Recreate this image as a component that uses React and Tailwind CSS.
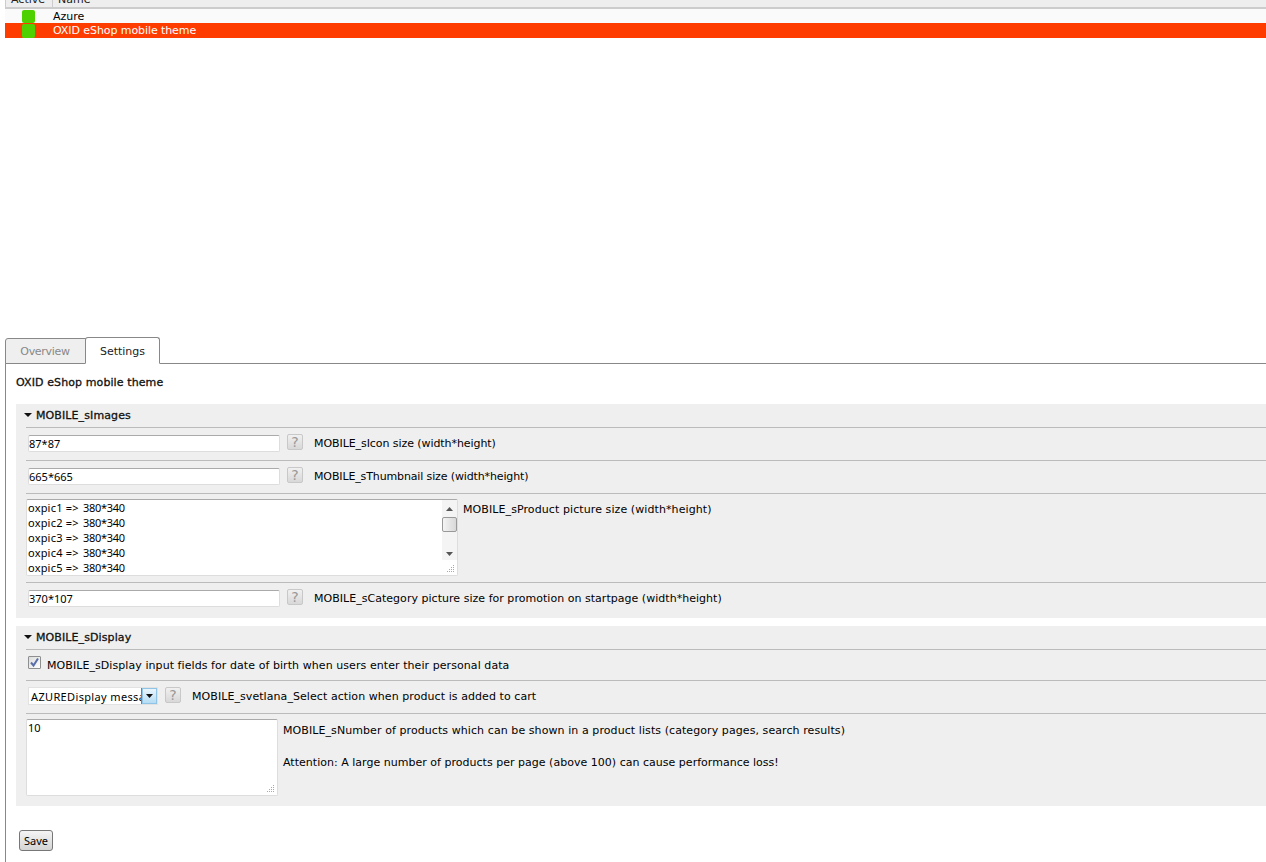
function Help() {
  return (
    <span className="shrink-0 w-[16px] h-[16px] border border-[#c8c8c8] rounded-[2px] bg-gradient-to-b from-[#f0f0f0] to-[#d8d8d8] flex items-center justify-center text-[14px] leading-none text-[#999]">?</span>
  );
}
function Grip() {
  return (
    <svg className="absolute right-[2px] bottom-[2px]" width="9" height="9" viewBox="0 0 9 9" fill="#aaa">
      <rect x="7" y="1" width="1" height="1" />
      <rect x="5" y="3" width="1" height="1" />
      <rect x="7" y="3" width="1" height="1" />
      <rect x="3" y="5" width="1" height="1" />
      <rect x="5" y="5" width="1" height="1" />
      <rect x="7" y="5" width="1" height="1" />
      <rect x="1" y="7" width="1" height="1" />
      <rect x="3" y="7" width="1" height="1" />
      <rect x="5" y="7" width="1" height="1" />
      <rect x="7" y="7" width="1" height="1" />
    </svg>
  );
}
function Caret() {
  return (
    <svg className="shrink-0" width="8" height="4" viewBox="0 0 8 4"><path d="M0 0h8L4 4z" fill="#111" /></svg>
  );
}
function InputRow({ value, label, tracking }) {
  return (
    <div className="border-t border-[#bbb] h-[33px] flex items-start pl-[2px]">
      <input readOnly value={value} className="mt-[7px] w-[252px] h-[17px] bg-white border border-[#ddd] border-t-[#aaa] rounded-[2px] px-0 text-[11px] text-black outline-none font-['Noto_Sans',sans-serif]" />
      <div className="mt-[6px] ml-[7px]"><Help /></div>
      <span className={"ml-[11px] mt-[9px] leading-[14px] " + tracking}>{label}</span>
    </div>
  );
}
function Group({ title, children, className }) {
  return (
    <section className={"bg-[#efefef] pl-[10px] " + className}>
      <div className="h-[23px] -ml-[10px] pl-[8px] pb-[1px] flex items-center gap-[4px] text-[#111] [-webkit-text-stroke:0.3px_#111] tracking-[0.1px]">
        <Caret /><span>{title}</span>
      </div>
      {children}
    </section>
  );
}
const pics = ["oxpic1", "oxpic2", "oxpic3", "oxpic4", "oxpic5"];
export default function App() {
  return (
    <div className="w-[1266px] h-[862px] overflow-hidden bg-white text-[11px] leading-[15px] text-black font-['DejaVu_Sans',sans-serif]">
      <div className="ml-[5px]">
        <div className="h-[9px] overflow-hidden bg-[#eeeeee] border-b-2 border-[#ccc] flex items-start text-[#222]">
          <span className="w-[48px] h-[7px] border-r border-l border-[#ccc] pl-[5px]"><span className="block -mt-[8px]">Active</span></span>
          <span className="pl-[5px]"><span className="block -mt-[8px]">Name</span></span>
        </div>
        <div className="h-[14px] bg-[#fafafa] flex items-center">
          <span className="ml-[17px] w-[13px] h-[13px] rounded-[2px] bg-[#4fd100]" />
          <span className="ml-[18px]">Azure</span>
        </div>
        <div className="h-[15px] bg-[#ff3c00] flex items-center text-white">
          <span className="ml-[17px] w-[13px] h-[14px] rounded-[2px] bg-[#4fd100]" />
          <span className="ml-[18px] tracking-[-0.08px]">OXID eShop mobile theme</span>
        </div>
      </div>
      <div className="h-[299px]" />
      <div className="ml-[5px] flex items-end h-[27px] border-b border-[#888]">
        <div className="w-[81px] h-[26px] -mb-px bg-[#efefef] border border-[#888] rounded-tl-[3px] pr-[1px] flex items-center justify-center text-[#888] tracking-[-0.3px]">Overview</div>
        <div className="w-[75px] h-[27px] -mb-px -ml-px bg-white border border-[#888] border-b-white rounded-t-[3px] pt-[1px] flex items-center justify-center text-[#222]">Settings</div>
      </div>
      <div className="ml-[5px] border-l border-[#888] pl-[10px] h-[498px]">
        <h1 className="h-[40px] pt-[11px] text-[#111] [-webkit-text-stroke:0.3px_#111] tracking-[0.1px]">OXID eShop mobile theme</h1>
        <Group title="MOBILE_sImages" className="h-[214px]">
          <InputRow value="87*87" label="MOBILE_sIcon size (width*height)" tracking="-tracking-[0.07px]" />
          <InputRow value="665*665" label="MOBILE_sThumbnail size (width*height)" tracking="-tracking-[0.13px]" />
          <div className="border-t border-[#bbb] h-[89px] flex items-start">
            <div className="relative mt-[5px] w-[432px] h-[77px] bg-white border border-[#ddd] border-t-[#aaa] rounded-[2px] overflow-hidden pl-[1px] font-['Noto_Sans',sans-serif]">
              {pics.map((p) => (
                <div key={p} className="whitespace-nowrap">
                  <span className="inline-block w-[55px] tracking-[0.2px]">{p} =&gt;</span><span className="tracking-[-0.3px]">380*340</span>
                </div>
              ))}
              <div className="absolute right-0 top-0 w-[15px] h-[60px] bg-[#f4f4f4] flex flex-col items-center">
                <svg className="mt-[7px]" width="7" height="4" viewBox="0 0 7 4"><path d="M0 4h7L3.5 0z" fill="#555" /></svg>
                <div className="mt-[6px] w-[15px] h-[15px] border border-[#999] rounded-[2px] bg-gradient-to-r from-[#f4f4f4] to-[#d8d8d8]" />
                <svg className="mt-[20px]" width="7" height="4" viewBox="0 0 7 4"><path d="M0 0h7L3.5 4z" fill="#555" /></svg>
              </div>
              <Grip />
            </div>
            <span className="ml-[5px] mt-[9px] leading-[14px] tracking-[0.09px]">MOBILE_sProduct picture size (width*height)</span>
          </div>
          <InputRow value="370*107" label="MOBILE_sCategory picture size for promotion on startpage (width*height)" tracking="tracking-[0.03px]" />
        </Group>
        <div className="h-[8px]" />
        <Group title="MOBILE_sDisplay" className="h-[180px]">
          <div className="border-t border-[#bbb] h-[31px] flex items-start pl-[2px]">
            <span className="mt-[6px] w-[13px] h-[13px] border border-[#8e8f8f] rounded-[1px] bg-gradient-to-br from-[#dcdcdc] to-white flex items-center justify-center">
              <svg width="11" height="11" viewBox="0 0 11 11"><path d="M2 5.5 4.5 8.5 9 1.5" fill="none" stroke="#5a6fa8" strokeWidth="2" /></svg>
            </span>
            <span className="ml-[6px] mt-[9px] leading-[14px] tracking-[0.07px]">MOBILE_sDisplay input fields for date of birth when users enter their personal data</span>
          </div>
          <div className="border-t border-[#bbb] h-[33px] flex items-start pl-[2px]">
            <div className="mt-[6px] w-[130px] h-[18px] bg-white border border-[#e2e2e2] flex overflow-hidden font-['Noto_Sans',sans-serif]">
              <span className="w-[113px] pl-[2px] overflow-hidden whitespace-nowrap leading-[18px] tracking-[0.35px] border-r border-[#3d8fcf]">AZUREDisplay message</span>
              <span className="flex-1 bg-gradient-to-b from-[#eaf5fc] to-[#b5dcf4] border border-[#8fc4e6] flex items-center justify-center"><svg width="7" height="4" viewBox="0 0 7 4"><path d="M0 0h7L3.5 4z" fill="#111" /></svg></span>
            </div>
            <div className="mt-[6px] ml-[7px]"><Help /></div>
            <span className="ml-[11px] mt-[9px] leading-[14px] tracking-[0.07px]">MOBILE_svetlana_Select action when product is added to cart</span>
          </div>
          <div className="border-t border-[#bbb] flex items-start">
            <div className="relative mt-[5px] w-[252px] h-[77px] bg-white border border-[#ddd] border-t-[#aaa] rounded-[2px] pl-[1px] font-['Noto_Sans',sans-serif]">
              10
              <Grip />
            </div>
            <div className="ml-[5px] mt-[9px] leading-[16px] tracking-[0.08px]">
              <p>MOBILE_sNumber of products which can be shown in a product lists (category pages, search results)</p>
              <p className="mt-[16px] tracking-[0.02px]">Attention: A large number of products per page (above 100) can cause performance loss!</p>
            </div>
          </div>
        </Group>
        <button className="mt-[24px] ml-[3px] w-[34px] h-[21px] border border-[#777] rounded-[3px] bg-gradient-to-b from-[#f4f4f4] to-[#d4d4d4] text-[11px] text-black flex items-center justify-center font-['Noto_Sans',sans-serif]">Save</button>
      </div>
    </div>
  );
}
